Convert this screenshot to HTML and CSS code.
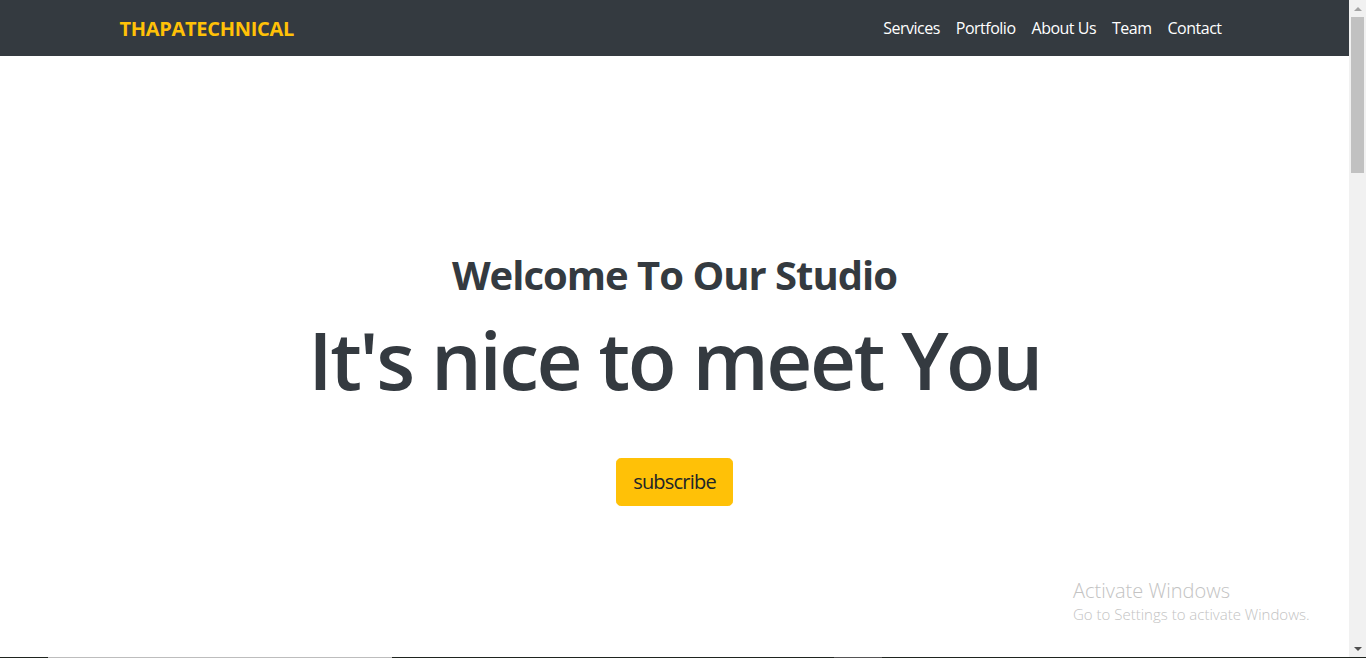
FILE: index.html
```html
<!DOCTYPE html>
<html lang="en">
<head>
<meta charset="utf-8">
<title>ThapaTechnical</title>
<link rel="stylesheet" href="styles.css">
</head>
<body>
<div class="screen">
  <div class="window">
    <div class="main">
      <nav class="navbar">
        <div class="container nav-inner">
          <a class="brand" href="#">THAPATECHNICAL</a>
          <ul class="nav-links">
            <li><a href="#">Services</a></li>
            <li><a href="#">Portfolio</a></li>
            <li><a href="#">About Us</a></li>
            <li><a href="#">Team</a></li>
            <li><a href="#">Contact</a></li>
          </ul>
        </div>
      </nav>
      <section class="hero">
        <h2 class="hero-sub">Welcome To Our Studio</h2>
        <h1 class="hero-title">It's nice to meet You</h1>
        <button class="btn-subscribe">subscribe</button>
      </section>
      <div class="watermark">
        <div class="wm-title">Activate Windows</div>
        <div class="wm-text">Go to Settings to activate Windows.</div>
      </div>
    </div>
    <div class="scrollbar">
      <div class="sb-btn"><span class="tri-up"></span></div>
      <div class="sb-track"><div class="sb-thumb"></div></div>
      <div class="sb-btn"><span class="tri-down"></span></div>
    </div>
  </div>
  <div class="taskbar-edge"></div>
</div>
</body>
</html>
```
FILE: styles.css
```css
* { box-sizing: border-box; }
html, body { margin: 0; padding: 0; height: 100%; overflow: hidden; }
body {
  font-family: "Open Sans", "Noto Sans", sans-serif;
  color: #212529;
  background: #fff;
}
.screen { display: flex; flex-direction: column; height: 658px; }
.window { display: flex; height: 657px; }
.main { flex: 1; position: relative; min-width: 0; }
.navbar { background: #343a40; height: 56px; }
.container { width: 1140px; margin: 0 auto; padding: 0 15px; }
.nav-inner { display: flex; align-items: center; justify-content: space-between; height: 56px; }
.brand {
  color: #ffc107; font-weight: 700; font-size: 20px; text-decoration: none;
  letter-spacing: -0.3px; line-height: 30px; padding-top: 1px;
}
.nav-links { display: flex; list-style: none; margin: 0; padding: 0; }
.nav-links a {
  display: block; color: #fff; text-decoration: none; font-size: 16px;
  padding: 8px; line-height: 24px; letter-spacing: -0.5px;
}
.hero { text-align: center; padding-top: 195px; color: #343a40; }
.hero-sub { margin: 0; font-size: 40px; font-weight: 700; line-height: 48px; letter-spacing: -1px; }
.hero-title { margin: 0; padding-top: 12px; font-size: 80px; font-weight: 600; line-height: 96px; letter-spacing: -2.45px; }
.btn-subscribe {
  margin-top: 51px;
  background: #ffc107; border: 1px solid #ffc107; color: #212529;
  font-family: inherit; font-size: 20px; line-height: 30px;
  padding: 8px 16px; border-radius: 4.8px; letter-spacing: -0.8px;
}
.watermark { position: absolute; left: 1073px; top: 578px; color: #c3c3c3; font-weight: 300; }
.wm-title { font-size: 20px; line-height: 26px; }
.wm-text { font-size: 15px; line-height: 20px; }
.scrollbar { width: 17px; background: #f1f1f1; display: flex; flex-direction: column; }
.sb-btn { height: 17px; display: flex; align-items: center; justify-content: center; }
.tri-up { width: 0; height: 0; border-left: 4px solid transparent; border-right: 4px solid transparent; border-bottom: 4px solid #a3a3a3; }
.tri-down { width: 0; height: 0; border-left: 4px solid transparent; border-right: 4px solid transparent; border-top: 4px solid #505050; }
.sb-track { flex: 1; padding: 0 2px; }
.sb-thumb { height: 156px; background: #c1c1c1; }
.taskbar-edge {
  height: 1px;
  background: linear-gradient(to right, #1f241f 0 48px, #bdbdbd 48px 392px, #1f241f 392px 834px, #555 834px 882px, #1f241f 882px);
}
```
